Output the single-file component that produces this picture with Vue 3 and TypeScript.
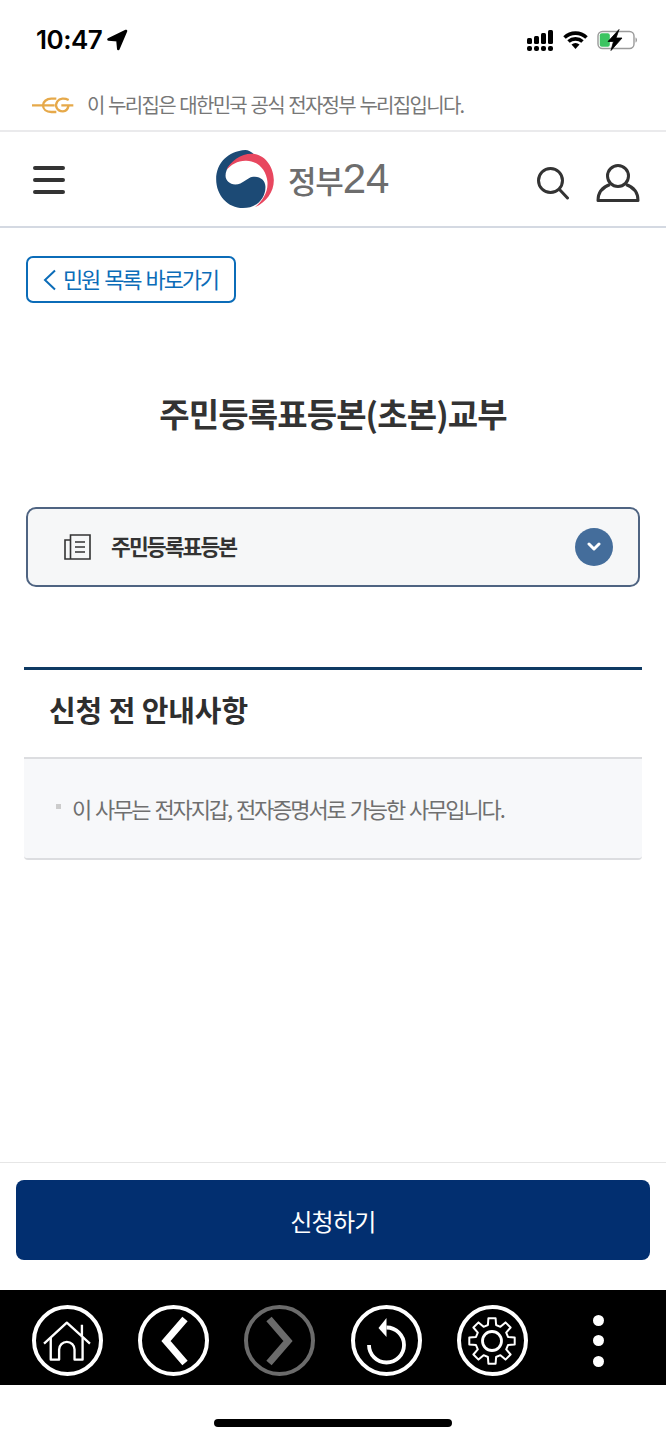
<template>
  <div class="page">
    <div class="status">
      <div class="time">
        <span>10:47</span>
        <svg width="22" height="22" viewBox="0 0 22 22"><path d="M20 2 2.500 10.500l9 .8.800 8.700z" fill="#000" stroke="#000" stroke-width="2.600" stroke-linejoin="round" /></svg>
      </div>
      <div class="status-icons">
        <svg width="26" height="21" viewBox="0 0 26 21" fill="#000">
          <template v-for="(top, i) in [8, 6, 3, 0]" :key="i">
            <rect :x="i * 7" :y="top" width="5" :height="14 - top" rx="1.5" />
            <rect :x="i * 7" y="16" width="5" height="5" rx="2" />
          </template>
        </svg>
        <svg width="25" height="18" viewBox="0 0 25 18">
          <path d="M1.500 6.500a16 16 0 0 1 22 0M5.500 10.500a10.500 10.500 0 0 1 14 0" fill="none" stroke="#000" stroke-width="3.600" />
          <path d="M8.500 13.500a6 6 0 0 1 8 0L12.500 18z" fill="#000" />
        </svg>
        <svg width="41" height="22" viewBox="0 0 41 22">
          <rect x="1" y="2.500" width="36" height="17" rx="4.500" fill="none" stroke="#9a9a9a" stroke-width="1.400" />
          <rect x="2.800" y="4.300" width="10" height="13.400" rx="2" fill="#3cc461" />
          <path d="M38.500 8.500c2 .5 2 4.500 0 5z" fill="#9a9a9a" />
          <path d="M22 .5 11 12.500h5.500L14 21.500 25 9h-6z" fill="#000" stroke="#000" stroke-width=".8" />
        </svg>
      </div>
    </div>

    <div class="notice">
      <svg width="50" height="26" viewBox="0 0 150 78" fill="none" stroke="#e6a94a" stroke-width="7">
        <path d="M12 40h68M85 20H70C55 20 45 30 45 40c0 12 10 20 25 20h15" />
        <path d="M122 24c-12-6-27-6-34 4-8 12-3 30 17 30 10 0 15-8 17-18h-22M122 40h14" />
      </svg>
      <span>이 누리집은 대한민국 공식 전자정부 누리집입니다.</span>
    </div>

    <header class="header">
      <svg class="menu" width="32" height="28" viewBox="0 0 32 28" fill="none" stroke="#333" stroke-width="4" stroke-linecap="round">
        <path d="M2 2h28M2 14h28M2 26h28" />
      </svg>
      <div class="logo">
        <svg width="60" height="58" viewBox="25 15 172 173">
          <path d="M112 15C60 18 25 55 25 102c0 48 35 86 80 86 40 0 67-28 67-63 0-20-17-33-37-30-20 3-30 23-53 23-17 0-29-13-29-26 0-22 17-40 42-50 10-6 30-10 45-12-10-10-20-15-28-15z" fill="#1c4a75" />
          <path d="M55 75c15-30 50-53 85-48 35 6 57 43 57 78 0 35-22 65-57 81 25-21 40-46 38-76-3-35-28-62-63-63-25-1-45 11-60 28z" fill="#e8475f" />
        </svg>
        <span class="logo-text">정부<b>24</b></span>
      </div>
      <div class="header-right">
        <svg width="34" height="34" viewBox="0 0 34 34" fill="none" stroke="#333" stroke-width="3" stroke-linecap="round">
          <circle cx="14.500" cy="14.500" r="12" />
          <path d="m23.500 23.500 8 8.500" />
        </svg>
        <svg width="44" height="38" viewBox="0 0 44 38" fill="none" stroke="#333" stroke-width="3" stroke-linejoin="round">
          <circle cx="22" cy="12" r="10.500" />
          <path d="M14 20.500C7 23 2 28 2 36.500h40c0-8.500-5-13.500-12-16" />
        </svg>
      </div>
    </header>

    <main class="main">
      <a class="back">
        <svg width="14" height="22" viewBox="0 0 14 22" fill="none" stroke="#0b6cb8" stroke-width="2"><path d="M12 1.500 2 11l10 9.500" /></svg>
        <span>민원 목록 바로가기</span>
      </a>

      <h1 class="title">주민등록표등본(초본)교부</h1>

      <div class="select">
        <svg width="27" height="26" viewBox="0 0 27 26" fill="none" stroke="#333" stroke-width="1.600">
          <path d="M6.500 1h19.500v24H1V6h5.500zM6.500 6v19" />
          <path d="M11 8h10M11 13h10M11 18h10" />
        </svg>
        <span>주민등록표등본</span>
        <div class="select-arrow">
          <svg width="14" height="10" viewBox="0 0 14 10" fill="none" stroke="#fff" stroke-width="3" stroke-linecap="round" stroke-linejoin="round"><path d="m2 2 5 5 5-5" /></svg>
        </div>
      </div>

      <section class="guide">
        <h2>신청 전 안내사항</h2>
        <div class="guide-box">
          <i></i>
          <p>이 사무는 전자지갑, 전자증명서로 가능한 사무입니다.</p>
        </div>
      </section>
    </main>

    <div class="apply-bar">
      <button class="apply">신청하기</button>
    </div>

    <nav class="toolbar">
      <div class="circle">
        <svg width="57" height="46" viewBox="60 56 170 137" fill="none" stroke="#fff" stroke-width="7" stroke-linejoin="round">
          <path d="M75 132 143 70l69 62M188 76v38" />
          <path d="M95 115v65h25v-30a23 23 0 0 1 46 0v30h24v-65" />
        </svg>
      </div>
      <div class="circle">
        <svg width="30" height="50" viewBox="0 0 30 50" fill="none" stroke="#fff" stroke-width="7"><path d="M26 3 7 25l19 22" /></svg>
      </div>
      <div class="circle off">
        <svg width="30" height="50" viewBox="0 0 30 50" fill="none" stroke="#6b6b6b" stroke-width="7"><path d="M4 3 23 25 4 47" /></svg>
      </div>
      <div class="circle">
        <svg width="50" height="50" viewBox="0 0 50 50" fill="none" stroke="#fff" stroke-width="3.800">
          <path d="M8 29a17.500 17.500 0 1 0 17.500-17.500" />
          <path d="M25.500 2 17.500 12l8 9z" fill="#fff" stroke="none" />
        </svg>
      </div>
      <div class="circle">
        <svg width="50" height="50" viewBox="0 0 50 50" fill="none" stroke="#fff" stroke-width="2" stroke-linejoin="round">
          <path :d="gear" />
          <circle cx="25" cy="25" r="9.500" stroke-width="2.800" />
        </svg>
      </div>
      <div class="dots"><i></i><i></i><i></i></div>
    </nav>

    <div class="home-area"><div class="home-bar"></div></div>
  </div>
</template>

<script setup lang="ts">
// 톱니 모양 경로 (이빨 8개)
const teeth = 8;
const points: string[] = [];
for (let i = 0; i < teeth; i++) {
  const a = (i / teeth) * Math.PI * 2;
  const step = (Math.PI * 2) / teeth;
  const pts: [number, number][] = [
    [16.5, a - step * 0.32],
    [23, a - step * 0.2],
    [23, a + step * 0.2],
    [16.5, a + step * 0.32],
  ];
  for (const [r, t] of pts) {
    points.push(`${(25 + r * Math.sin(t)).toFixed(1)} ${(25 - r * Math.cos(t)).toFixed(1)}`);
  }
}
const gear = `M${points.join("L")}Z`;
</script>

<style>
body {
  background: #fff;
}
</style>

<style scoped>
.page {
  width: 666px;
  height: 1440px;
  display: flex;
  flex-direction: column;
  background: #fff;
  font-family: "Noto Sans CJK KR", "Liberation Sans", sans-serif;
  overflow: hidden;
}

.status {
  height: 84px;
  box-sizing: border-box;
  padding: 26px 28px 0 36px;
  display: flex;
  justify-content: space-between;
  align-items: flex-start;
}

.time {
  display: flex;
  align-items: center;
  gap: 4px;
  font-family: "Inter", "Liberation Sans", sans-serif;
  font-size: 26px;
  line-height: 28px;
  font-weight: 600;
  letter-spacing: -0.5px;
  color: #000;
}

.status-icons {
  display: flex;
  align-items: center;
  gap: 9.5px;
  height: 28px;
}

.notice {
  height: 48px;
  flex: none;
  box-sizing: border-box;
  display: flex;
  align-items: center;
  gap: 9px;
  padding: 0 0 4px 28px;
  border-bottom: 2px solid #eaeaec;
  font-size: 20px;
  letter-spacing: -1.7px;
  word-spacing: 1.6px;
  color: #777;
}

.notice span {
  padding-bottom: 1px;
}

.header {
  height: 96px;
  flex: none;
  box-sizing: border-box;
  display: flex;
  align-items: center;
  padding: 0 26px 0 33px;
  border-bottom: 2px solid #d4d9e2;
}

.menu {
  margin-top: 1px;
}

.logo {
  margin-left: 150px;
  display: flex;
  align-items: center;
  gap: 13px;
}

.logo-text {
  font-size: 31px;
  line-height: 60px;
  font-weight: 500;
  letter-spacing: -1.2px;
  color: #6d6d6d;
}

.logo-text b {
  font-family: "Liberation Sans", sans-serif;
  font-size: 42px;
  font-weight: 400;
  letter-spacing: 0;
}

.header-right {
  margin-left: auto;
  margin-top: 7px;
  display: flex;
  align-items: center;
  gap: 26px;
}

.main {
  flex: 1;
  padding: 28px 24px 0;
  display: flex;
  flex-direction: column;
}

.back {
  align-self: flex-start;
  margin-left: 2px;
  width: 210px;
  height: 47px;
  box-sizing: border-box;
  border: 2px solid #0b6cb8;
  border-radius: 7px;
  display: flex;
  align-items: center;
  gap: 6px;
  padding-left: 15px;
  font-size: 22px;
  letter-spacing: -2.2px;
  word-spacing: 2.500px;
  color: #0b6cb8;
}

.back span {
  padding-bottom: 3px;
}

.title {
  margin: 85px 0 0;
  height: 50px;
  line-height: 50px;
  text-align: center;
  font-size: 33px;
  font-weight: 700;
  letter-spacing: -0.87px;
  color: #333;
}

.select {
  margin: 69px 2px 0;
  height: 80px;
  flex: none;
  box-sizing: border-box;
  border: 2px solid #4f6482;
  border-radius: 10px;
  background: #f6f7f8;
  display: flex;
  align-items: center;
  padding: 0 25px 0 36px;
  font-size: 21.500px;
  font-weight: 700;
  letter-spacing: -1.900px;
  color: #333;
}

.select span {
  margin-left: 20px;
  padding-bottom: 3px;
  flex: 1;
}

.select-arrow {
  width: 38px;
  height: 38px;
  border-radius: 50%;
  background: #446d9b;
  display: flex;
  align-items: center;
  justify-content: center;
}

.guide {
  margin-top: 80px;
  border-top: 3px solid #0f3a63;
}

.guide h2 {
  margin: 0;
  height: 89px;
  line-height: 78px;
  padding-left: 25px;
  box-sizing: border-box;
  border-bottom: 2px solid #dcdde0;
  font-size: 29px;
  font-weight: 700;
  letter-spacing: -0.1px;
  color: #2e2e2e;
}

.guide-box {
  height: 101px;
  box-sizing: border-box;
  display: flex;
  align-items: center;
  gap: 11px;
  padding-left: 32px;
  background: #f7f8fa;
  border-bottom: 2px solid #dcdde0;
  border-radius: 0 0 4px 4px;
}

.guide-box i {
  width: 5px;
  height: 5px;
  background: #ccc;
  margin-bottom: 4px;
}

.guide-box p {
  margin: 0 0 2px;
  font-size: 22px;
  letter-spacing: -2.100px;
  word-spacing: 2.100px;
  color: #6f6f6f;
}

.apply-bar {
  height: 128px;
  flex: none;
  box-sizing: border-box;
  padding: 17px 16px 0;
  border-top: 1px solid #e6e6e6;
}

.apply {
  display: block;
  width: 100%;
  height: 80px;
  border: none;
  border-radius: 8px;
  background: #022f70;
  color: #fff;
  font-family: inherit;
  font-size: 24px;
  letter-spacing: -0.7px;
}

.toolbar {
  height: 95px;
  flex: none;
  box-sizing: border-box;
  background: #000;
  display: flex;
  align-items: center;
  padding: 6px 0 0 32px;
  gap: 35.200px;
}

.circle {
  width: 71px;
  height: 71px;
  box-sizing: border-box;
  border: 4px solid #fff;
  border-radius: 50%;
  display: flex;
  align-items: center;
  justify-content: center;
  flex: none;
}

.circle.off {
  border-color: #6b6b6b;
}

.dots {
  width: 71px;
  display: flex;
  flex-direction: column;
  align-items: center;
  gap: 9.500px;
}

.dots i {
  width: 11px;
  height: 11px;
  border-radius: 50%;
  background: #fff;
}

.home-area {
  height: 55px;
  flex: none;
  display: flex;
  justify-content: center;
  padding-top: 34px;
  box-sizing: border-box;
}

.home-bar {
  width: 238px;
  height: 8px;
  border-radius: 4px;
  background: #000;
}
</style>
